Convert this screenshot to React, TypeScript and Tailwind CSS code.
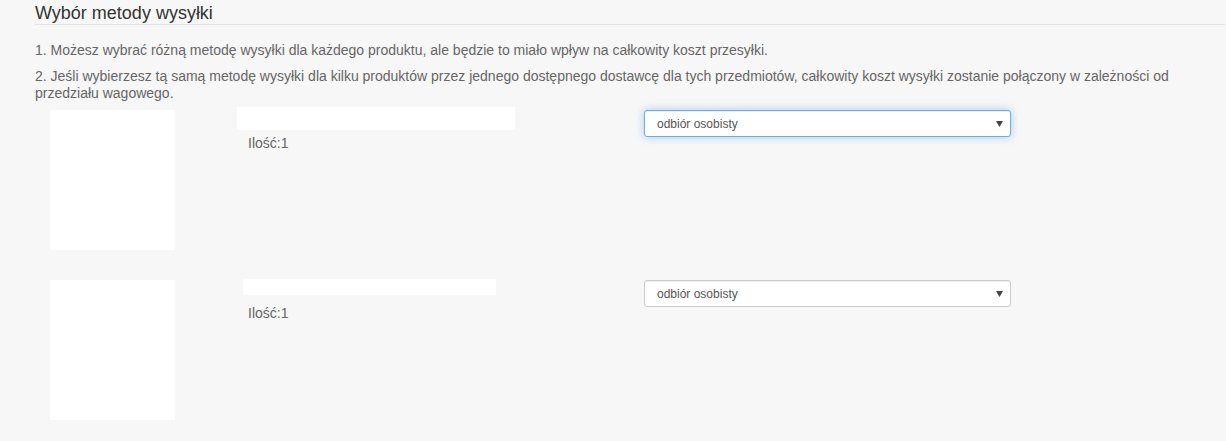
import React from "react";

function Select({ focused }: { focused?: boolean }) {
  return (
    <div
      className={
        focused
          ? "relative h-[27px] w-[367px] rounded-[3px] border border-[#66afe9] bg-white shadow-[inset_0_1px_1px_rgba(0,0,0,0.075),0_0_8px_rgba(102,175,233,0.6)]"
          : "relative h-[27px] w-[367px] rounded-[3px] border border-[#cccccc] bg-white shadow-[inset_0_1px_1px_rgba(0,0,0,0.075)]"
      }
    >
      <div className="flex h-full items-center pl-[12px] text-[12px] leading-[16px] text-[#555]">
        odbiór osobisty
      </div>
      <svg
        className="absolute right-[7px] top-[10px]"
        width="7"
        height="6"
        viewBox="0 0 7 6"
      >
        <polygon points="0,0 7,0 3.5,6" fill="#444" />
      </svg>
    </div>
  );
}

export default function App() {
  return (
    <div className="min-h-[441px] bg-[#f7f7f7] font-['Liberation_Sans',Arial,sans-serif]">
      <div className="pl-[35px] pr-[1px]">
        <h3 className="border-b border-[#e3e3e3] pb-[1px] pt-[3px] text-[18px] leading-[20px] text-[#333]">
          Wybór metody wysyłki
        </h3>
        <p className="mt-[17px] text-[14px] leading-[17px] text-[#666]">
          1. Możesz wybrać różną metodę wysyłki dla każdego produktu, ale będzie to miało wpływ na całkowity koszt przesyłki.
        </p>
        <p className="mt-[9px] text-[14px] leading-[17px] text-[#666]">
          2. Jeśli wybierzesz tą samą metodę wysyłki dla kilku produktów przez jednego dostępnego dostawcę dla tych przedmiotów, całkowity koszt wysyłki zostanie połączony w zależności od przedziału wagowego.
        </p>

        <div className="flex h-[170px] items-start">
          <div className="ml-[15px] mt-[8px] h-[140px] w-[125px] bg-white" />
          <div className="ml-[62px] w-[407px]">
            <div className="mt-[5px] h-[23px] w-[278px] bg-white" />
            <div className="ml-[11px] mt-[3px] text-[14px] leading-[20px] text-[#666]">
              Ilość:1
            </div>
          </div>
          <div className="mt-[8px]">
            <Select focused />
          </div>
        </div>

        <div className="flex h-[170px] items-start">
          <div className="ml-[15px] mt-[8px] h-[140px] w-[125px] bg-white" />
          <div className="ml-[62px] w-[407px]">
            <div className="ml-[6px] mt-[7px] h-[16px] w-[253px] bg-white" />
            <div className="ml-[11px] mt-[8px] text-[14px] leading-[20px] text-[#666]">
              Ilość:1
            </div>
          </div>
          <div className="mt-[8px]">
            <Select />
          </div>
        </div>
      </div>
    </div>
  );
}
